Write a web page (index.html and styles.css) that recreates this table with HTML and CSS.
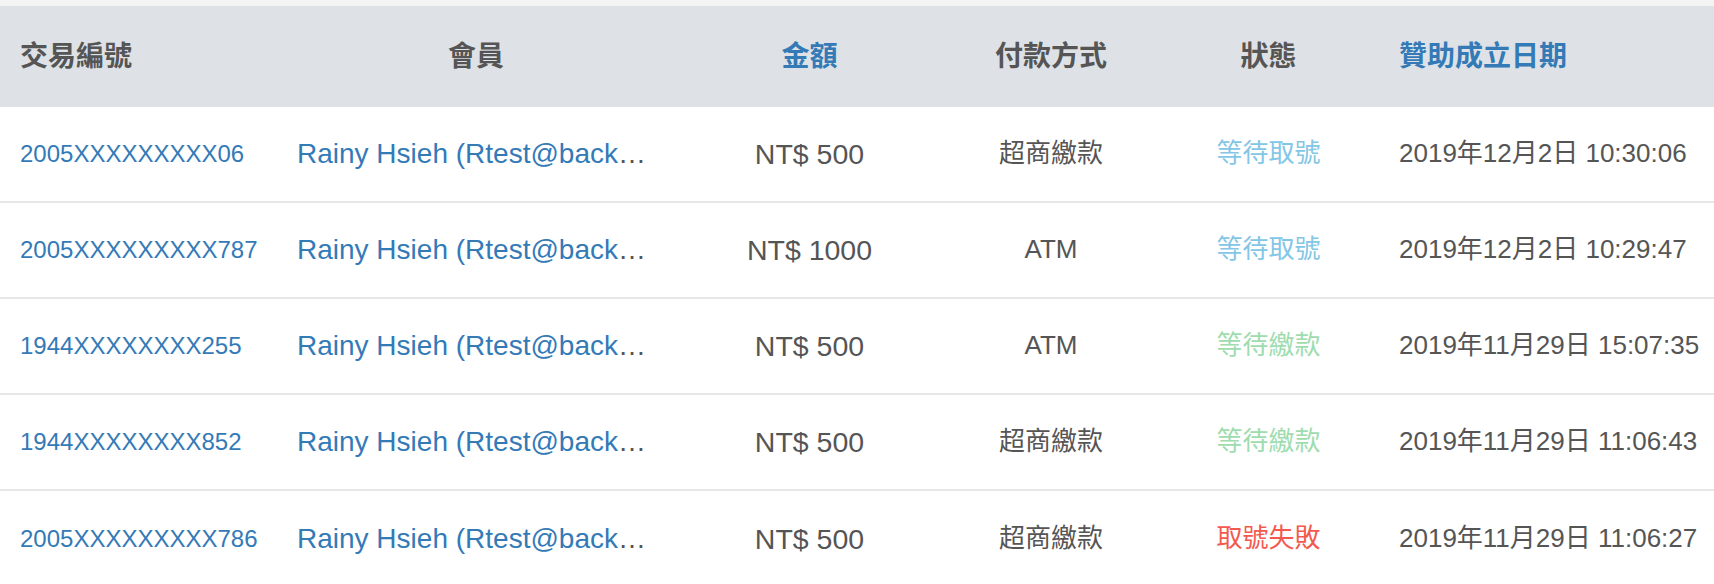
FILE: index.html
```html
<!DOCTYPE html>
<html lang="zh-Hant">
<head>
<meta charset="utf-8">
<title>贊助紀錄</title>
<link rel="stylesheet" href="styles.css">
</head>
<body>
<div class="page">
  <div class="topstrip"></div>
  <div class="table">
    <div class="row head">
      <div class="cell c-id">交易編號</div>
      <div class="cell c-member center">會員</div>
      <div class="cell c-amount center sort">金額</div>
      <div class="cell c-pay center">付款方式</div>
      <div class="cell c-status center">狀態</div>
      <div class="cell c-date sort">贊助成立日期</div>
    </div>

    <div class="row">
      <div class="cell c-id"><a class="link id">2005XXXXXXXXX06</a></div>
      <div class="cell c-member"><a class="link name">Rainy Hsieh (Rtest@back</a><span class="more">…</span></div>
      <div class="cell c-amount center amount">NT$ 500</div>
      <div class="cell c-pay center pay">超商繳款</div>
      <div class="cell c-status center status s-wait-no">等待取號</div>
      <div class="cell c-date date">2019年12月2日 10:30:06</div>
    </div>

    <div class="row">
      <div class="cell c-id"><a class="link id">2005XXXXXXXXX787</a></div>
      <div class="cell c-member"><a class="link name">Rainy Hsieh (Rtest@back</a><span class="more">…</span></div>
      <div class="cell c-amount center amount">NT$ 1000</div>
      <div class="cell c-pay center pay">ATM</div>
      <div class="cell c-status center status s-wait-no">等待取號</div>
      <div class="cell c-date date">2019年12月2日 10:29:47</div>
    </div>

    <div class="row">
      <div class="cell c-id"><a class="link id">1944XXXXXXXX255</a></div>
      <div class="cell c-member"><a class="link name">Rainy Hsieh (Rtest@back</a><span class="more">…</span></div>
      <div class="cell c-amount center amount">NT$ 500</div>
      <div class="cell c-pay center pay">ATM</div>
      <div class="cell c-status center status s-wait-pay">等待繳款</div>
      <div class="cell c-date date">2019年11月29日 15:07:35</div>
    </div>

    <div class="row">
      <div class="cell c-id"><a class="link id">1944XXXXXXXX852</a></div>
      <div class="cell c-member"><a class="link name">Rainy Hsieh (Rtest@back</a><span class="more">…</span></div>
      <div class="cell c-amount center amount">NT$ 500</div>
      <div class="cell c-pay center pay">超商繳款</div>
      <div class="cell c-status center status s-wait-pay">等待繳款</div>
      <div class="cell c-date date">2019年11月29日 11:06:43</div>
    </div>

    <div class="row last">
      <div class="cell c-id"><a class="link id">2005XXXXXXXXX786</a></div>
      <div class="cell c-member"><a class="link name">Rainy Hsieh (Rtest@back</a><span class="more">…</span></div>
      <div class="cell c-amount center amount">NT$ 500</div>
      <div class="cell c-pay center pay">超商繳款</div>
      <div class="cell c-status center status s-fail">取號失敗</div>
      <div class="cell c-date date">2019年11月29日 11:06:27</div>
    </div>
  </div>
</div>
</body>
</html>
```

FILE: styles.css
```css
* { box-sizing: border-box; }

html, body {
  margin: 0;
  padding: 0;
  background: #ffffff;
}

body {
  font-family: "Liberation Sans", "Noto Sans CJK TC", sans-serif;
  color: #555555;
}

.page {
  width: 1714px;
  overflow: hidden;
}

.topstrip {
  height: 6px;
  background: #f4f4f4;
}

.table {
  display: flex;
  flex-direction: column;
}

.row {
  display: grid;
  grid-template-columns: 280px 392px 275px 208px 227px 1fr;
  align-items: center;
  height: 96px;
  border-bottom: 2px solid #e7e7e7;
}

.row.head {
  height: 101px;
  background: #dee2e6;
  border-bottom: none;
  font-size: 28px;
  font-weight: bold;
  color: #555555;
}

.row.last {
  border-bottom: none;
}

.cell {
  padding: 0 17px;
  white-space: nowrap;
  min-width: 0;
  line-height: 1.2;
}

.cell.c-id {
  padding-left: 20px;
}

.center {
  text-align: center;
}

.sort {
  color: #337ab7;
}

.link {
  color: #337ab7;
  text-decoration: none;
}

.id {
  font-size: 24px;
}

.c-member {
  font-size: 28px;
}

.name {
  font-size: 28px;
}

.more {
  color: #555555;
  letter-spacing: 1px;
}

.amount {
  font-size: 28.5px;
  color: #555555;
}

.pay {
  font-size: 26px;
  color: #555555;
}

.status {
  font-size: 26px;
}

.s-wait-no { color: #84c6e5; }
.s-wait-pay { color: #9edcae; }
.s-fail { color: #f35a4f; }

.date {
  font-size: 26px;
  color: #555555;
}
```
